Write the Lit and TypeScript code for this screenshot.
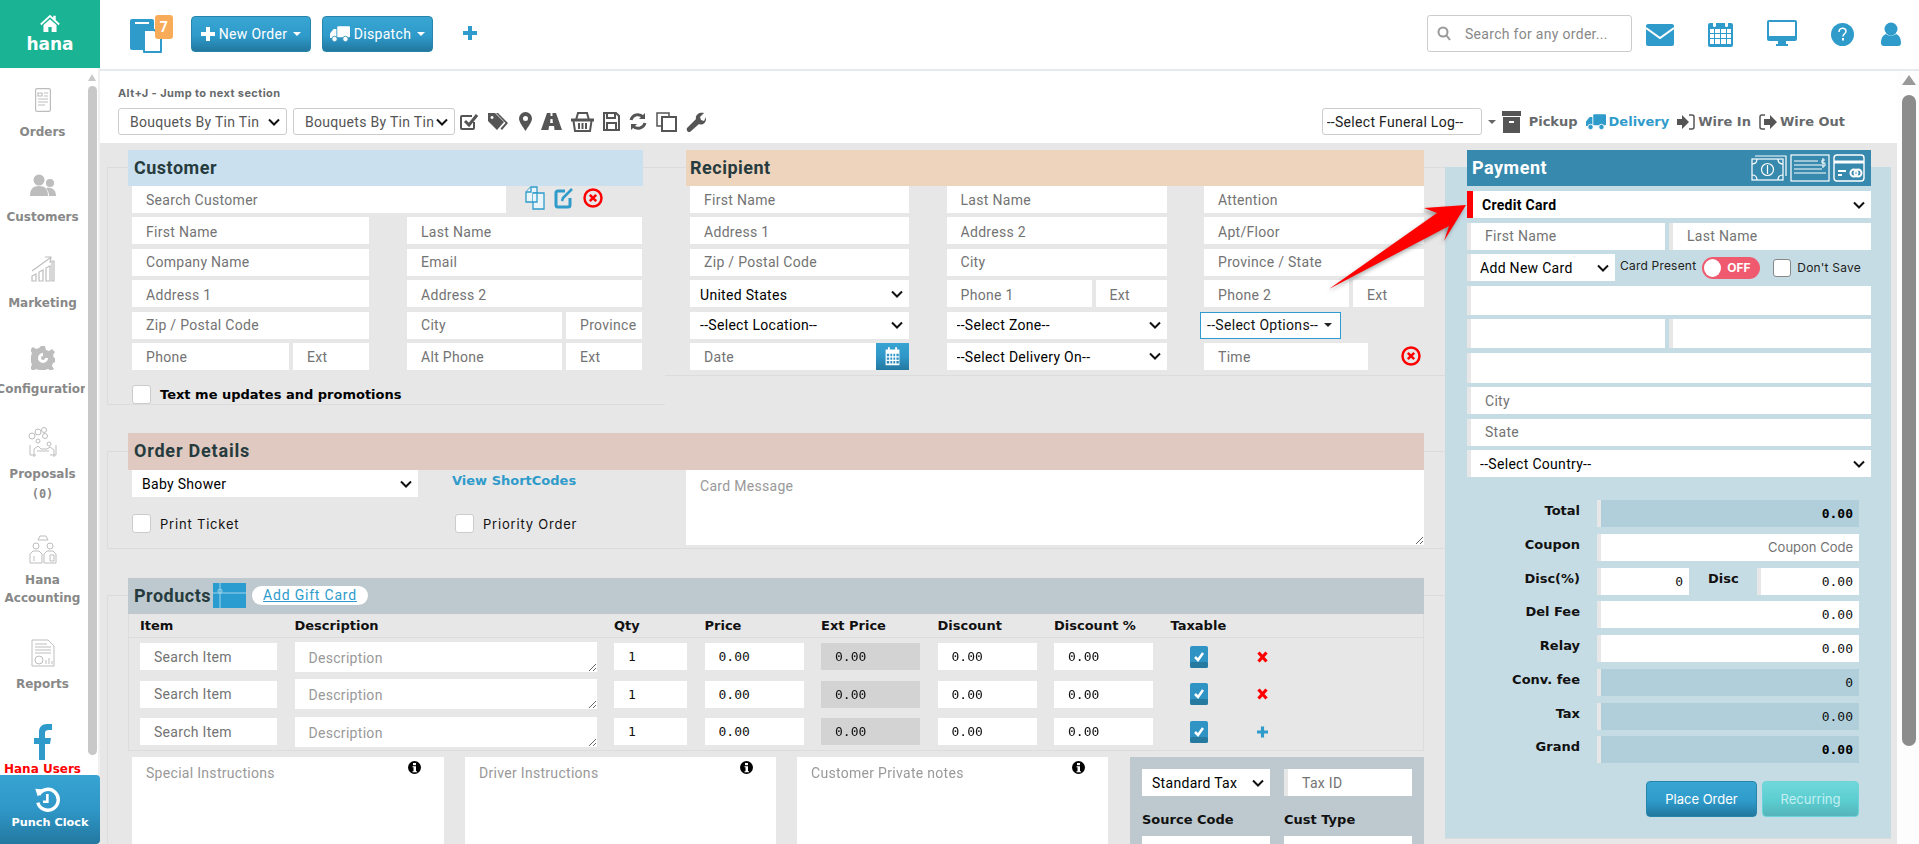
import { LitElement, html, css } from "lit";
import { customElement } from "lit/decorators.js";

const ic = {
  home: html`<svg width="20" height="18" viewBox="0 0 24 22" fill="#fff"><path d="M12 1 0 12l1.5 1.6L12 4l10.500 9.600L24 12l-5-4.600V2h-3v2.600z"/><path d="M12 6.500 4 13.500V22h6v-6h4v6h6v-8.500z"/></svg>`,
  doc: html`<svg width="34" height="34" viewBox="0 0 34 34"><rect x="1" y="0" width="24" height="31" rx="2" fill="#2f9bcb"/><rect x="6" y="3" width="14" height="2" fill="#fff"/><rect x="14" y="10" width="19" height="24" rx="1" fill="#2f9bcb"/><path d="M16 12h9l6 6v14H16z" fill="#fff"/></svg>`,
  plus: html`<svg width="14" height="14" viewBox="0 0 14 14" fill="currentColor"><path d="M5 0h4v5h5v4H9v5H5V9H0V5h5z"/></svg>`,
  truck: html`<svg width="20" height="16" viewBox="0 0 22 17" fill="currentColor"><rect x="8" y="0" width="14" height="12" rx="1"/><path d="M7 3H4L0 8v5h7z"/><circle cx="5" cy="14" r="3" stroke="#fff" stroke-width="1"/><circle cx="17" cy="14" r="3" stroke="#fff" stroke-width="1"/></svg>`,
  mail: html`<svg width="28" height="22" viewBox="0 0 28 22"><rect width="28" height="22" rx="2" fill="#2f9bcb"/><path d="M0 4l14 10L28 4" fill="none" stroke="#fff" stroke-width="2"/></svg>`,
  cal: html`<svg width="25" height="27" viewBox="0 0 25 27"><rect y="3" width="25" height="24" rx="2" fill="#2f9bcb"/><g fill="#fff"><rect x="5" y="0" width="3" height="7" rx="1.500"/><rect x="17" y="0" width="3" height="7" rx="1.500"/><path d="M2 9h4v4H2zm5 0h5v4H7zm6 0h5v4h-5zm6 0h4v4h-4zM2 14h4v4H2zm5 0h5v4H7zm6 0h5v4h-5zm6 0h4v4h-4zM2 19h4v5H2zm5 0h5v5H7zm6 0h5v5h-5zm6 0h4v5h-4z"/></g></svg>`,
  screen: html`<svg width="30" height="26" viewBox="0 0 30 26"><rect width="30" height="21" rx="2" fill="#2f9bcb"/><rect x="2" y="2" width="26" height="14" fill="#fff"/><path d="M11 21h8v3h2v2H9v-2h2z" fill="#2f9bcb"/></svg>`,
  help: html`<svg width="23" height="23" viewBox="0 0 23 23"><circle cx="11.500" cy="11.500" r="11.500" fill="#2f9bcb"/><path d="M8 9c0-5 7-5 7-.8 0 2.600-3 2.600-3 5.300" fill="none" stroke="#fff" stroke-width="1.500"/><rect x="11" y="15" width="2" height="2.500" fill="#fff"/></svg>`,
  user: html`<svg width="20" height="24" viewBox="0 0 20 24" fill="#2f9bcb"><circle cx="10" cy="7" r="6.500"/><path d="M0 21c0-5 2-8 5-9 3 2 7 2 10 0 3 1 5 4 5 9 0 2-1 3-3 3H3c-2 0-3-1-3-3z"/></svg>`,
  search: html`<svg width="14" height="15" viewBox="0 0 14 15" fill="none" stroke="#999" stroke-width="2"><circle cx="6" cy="6" r="4.500"/><path d="M9.500 9.500 13 14"/></svg>`,
  check: html`<svg width="18" height="19" viewBox="0 0 18 19" fill="none" stroke="#555" stroke-width="2"><path d="M14 10v6a1 1 0 0 1-1 1H2a1 1 0 0 1-1-1V5a1 1 0 0 1 1-1h10"/><path d="M5 9l4 4 8-10" stroke-width="3"/></svg>`,
  tag: html`<svg width="22" height="19" viewBox="0 0 22 19" fill="#555"><path d="M0 1h7l9 9-7 8-9-9zM4 4a1.500 1.500 0 1 0 .1 0z" fill-rule="evenodd"/><path d="M10 1l10 10-6 7-1.500-1.500 5-5.500L8 1z"/></svg>`,
  pin: html`<svg width="13" height="19" viewBox="0 0 13 19" fill="#555"><path fill-rule="evenodd" d="M6.500 0A6.500 6.500 0 0 0 0 6.500C0 10 4 15 6.500 19 9 15 13 10 13 6.500A6.500 6.500 0 0 0 6.500 0zm0 4a2.500 2.500 0 1 1 0 5 2.500 2.500 0 0 1 0-5z"/></svg>`,
  road: html`<svg width="21" height="17" viewBox="0 0 21 17" fill="#555"><path fill-rule="evenodd" d="M6 0h3.500v3h2V0H15l6 17h-7.500l-.4-4H8l-.5 4H0zm3.500 6-.4 4h2.800l-.4-4z"/></svg>`,
  basket: html`<svg width="23" height="20" viewBox="0 0 23 20" fill="none" stroke="#555" stroke-width="2"><path d="M5 8 7 1h9l2 7"/><path d="M0 8h23" stroke-width="3"/><path d="M2.500 9 4 19h15l1.500-10M8 11v6M11.500 11v6M15 11v6"/></svg>`,
  save: html`<svg width="17" height="19" viewBox="0 0 17 19" fill="none" stroke="#555" stroke-width="2"><path d="M1 1h12l3 3v14H1z"/><path d="M4 1v5h8V1M4 18v-7h9v7"/></svg>`,
  refresh: html`<svg width="18" height="19" viewBox="0 0 18 19" fill="none" stroke="#555" stroke-width="3"><path d="M2 8a7 7 0 0 1 12-3M16 11a7 7 0 0 1-12 3"/><path d="M16 1v6h-6z" fill="#555" stroke="none"/><path d="M2 18v-6h6z" fill="#555" stroke="none"/></svg>`,
  copy: html`<svg width="21" height="20" viewBox="0 0 21 20" fill="none" stroke="#555" stroke-width="1.500"><path d="M6 14H1V1h12v4"/><rect x="6" y="5" width="14" height="14" stroke-width="2"/></svg>`,
  wrench: html`<svg width="20" height="20" viewBox="0 0 20 20" fill="#555"><path d="M1 16 10 7c-1-4 3-7 8-6l-4 4 1 3 3 1 2-4c1 5-3 9-7 7l-9 8c-2 1-4-2-3-4z"/></svg>`,
  archive: html`<svg width="19" height="22" viewBox="0 0 19 22" fill="#555"><rect width="19" height="5"/><path fill-rule="evenodd" d="M1 6h17v16H1zM7 10v2h5v-2z"/></svg>`,
  signin: html`<svg width="18" height="16" viewBox="0 0 18 16"><path d="M0 5h5V1l7 7-7 7v-4H0z" fill="#555"/><path d="M12 1h3a2 2 0 0 1 2 2v10a2 2 0 0 1-2 2h-3" fill="none" stroke="#555" stroke-width="1.500"/></svg>`,
  signout: html`<svg width="18" height="16" viewBox="0 0 18 16"><path d="M5 5h6V1l7 7-7 7v-4H5z" fill="#555"/><path d="M6 1H3a2 2 0 0 0-2 2v10a2 2 0 0 0 2 2h3" fill="none" stroke="#555" stroke-width="1.500"/></svg>`,
  dupes: html`<svg width="20" height="24" viewBox="0 0 20 24" fill="#eaf5fa" stroke="#2f9bcb" stroke-width="1.300"><path d="M6 1h6v15H1V6z"/><path d="M6 1v5H1"/><path d="M8 7h11v16H8z"/><path d="M8 7l4 0v9H8"/></svg>`,
  edit: html`<svg width="20" height="22" viewBox="0 0 20 22" fill="none" stroke="#2f9bcb" stroke-width="3"><path d="M11 4H4a2 2 0 0 0-2 2v12a2 2 0 0 0 2 2h10a2 2 0 0 0 2-2v-7"/><path d="M8 14l1-3 9-9" stroke-width="2.500"/></svg>`,
  xc: html`<svg width="20" height="20" viewBox="0 0 20 20" fill="none" stroke="#f00" stroke-width="2.500"><circle cx="10" cy="10" r="8.500"/><path d="M6.800 6.800l6.400 6.400M13.200 6.800l-6.400 6.400"/></svg>`,
  calw: html`<svg width="15" height="19" viewBox="0 0 25 31" fill="#fff"><rect x="5" y="0" width="3" height="7"/><rect x="17" y="0" width="3" height="7"/><path fill-rule="evenodd" d="M1 4h23v26H1zM3 11v4h4v-4zm6 0v4h3v-4zm5 0v4h3v-4zm5 0v4h4v-4zM3 17v4h4v-4zm6 0v4h3v-4zm5 0v4h3v-4zm5 0v4h4v-4zM3 23v4h4v-4zm6 0v4h3v-4zm5 0v4h3v-4zm5 0v4h4v-4z"/></svg>`,
  info: html`<svg width="13" height="13" viewBox="0 0 13 13"><circle cx="6.500" cy="6.500" r="6.500" fill="#000"/><rect x="5" y="2" width="3" height="2.200" fill="#fff"/><path d="M4.500 5.300h3.500v5h1v1H4.500v-1h1v-4h-1z" fill="#fff"/></svg>`,
  x: html`<svg width="11" height="12" viewBox="0 0 11 12" fill="none" stroke="#f00" stroke-width="3.200"><path d="M1.500 1.500l8 9M9.500 1.500l-8 9"/></svg>`,
  tick: html`<svg width="18" height="22" viewBox="0 0 18 22"><rect width="18" height="22" rx="2" fill="#2f93c4"/><rect y="16" width="18" height="6" rx="2" fill="#26799f"/><path d="M5 11l3 3 5-7" fill="none" stroke="#fff" stroke-width="2.500"/></svg>`,
  cash: html`<svg width="36" height="28" viewBox="0 0 36 28" fill="none" stroke="#fff" stroke-width="1.200"><path d="M4 2h31v20"/><rect x="1" y="5" width="31" height="21"/><circle cx="16.500" cy="15.500" r="6"/><path d="M1 10c3 0 5-2 5-5M32 10c-3 0-5-2-5-5M1 21c3 0 5 2 5 5M32 21c-3 0-5 2-5 5M16.500 11v9"/></svg>`,
  cheque: html`<svg width="40" height="28" viewBox="0 0 40 28" fill="none" stroke="#fff" stroke-width="1.200"><rect x="1" y="1" width="38" height="26"/><path d="M4 7h24M4 11h28M4 15h28M4 19h32"/><path d="M33 4v10M35 6h-3v3h3v3h-3" stroke-width="1"/></svg>`,
  ccard: html`<svg width="32" height="28" viewBox="0 0 32 28" fill="none" stroke="#fff" stroke-width="1.400"><rect x="1" y="1" width="30" height="26" rx="3"/><path d="M1 8h30" stroke-width="3"/><path d="M5 17h8M5 21h4" stroke-width="2"/><circle cx="21" cy="19" r="3.500" stroke-width="2"/><circle cx="25" cy="19" r="3.500" stroke-width="2"/></svg>`,
  clock: html`<svg width="27" height="26" viewBox="0 0 28 30" fill="none" stroke="#fff" stroke-width="4"><path d="M5 9a12 12 0 1 1-1 9"/><path d="M1 2l10 1-7 8z" fill="#fff" stroke="none"/><path d="M15 8v9h-5" stroke-width="3"/></svg>`,
  gift: html`<svg width="33" height="25" viewBox="0 0 33 25"><rect width="33" height="25" fill="#2b9ccf"/><path d="M7 0v25M0 10h33" stroke="#9fd3ea" stroke-width="1" fill="none"/><circle cx="7" cy="8" r="2" fill="none" stroke="#9fd3ea"/></svg>`,
};
const g = "#bdbdbd";
const side = {
  orders: html`<svg width="16" height="24" viewBox="0 0 16 24" fill="none" stroke="${g}" stroke-width="1.200"><rect x=".6" y=".6" width="14.800" height="22.800" rx="1.500"/><path d="M3 5h4v3H3zM9 5h4M9 8h4M3 11h10M3 14h10M3 17h7"/></svg>`,
  customers: html`<svg width="26" height="24" viewBox="0 0 26 24" fill="${g}"><circle cx="9" cy="6" r="5.500"/><circle cx="20" cy="9" r="4"/><path d="M0 22c0-7 3-10 9-10 6 0 9 3 9 10z"/><path d="M16 14c5-1 10 1 10 8h-7c0-3-1-6-3-8z"/></svg>`,
  marketing: html`<svg width="24" height="26" viewBox="0 0 24 26" fill="none" stroke="${g}" stroke-width="1.200"><path d="M1 20v5h4v-7zM8 16v9h4V14zM15 12v13h4V10zM21 5v20h2V5z"/><path d="M1 15 19 2M14 1l6 0-1 6"/></svg>`,
  config: html`<svg width="24" height="24" viewBox="0 0 24 24" fill="${g}"><path fill-rule="evenodd" d="M10 0h4l1 4 3 1 3-2 3 3-2 3 1 3 2 0v4l-3 1-1 3 2 3-3 2-3-2-3 1-1 3h-4l-1-3-3-1-3 2-3-3 2-3-1-3-3-1v-4l3-1 1-3-2-3 3-3 3 2 3-1zM12 7a5 5 0 1 0 5 5h-3a2 2 0 1 1-2-2z"/></svg>`,
  proposals: html`<svg width="32" height="32" viewBox="0 0 32 32" fill="none" stroke="${g}" stroke-width="1"><circle cx="5" cy="9" r="3"/><circle cx="11" cy="5" r="3"/><circle cx="17" cy="3" r="2.500"/><circle cx="18" cy="9" r="2.500"/><circle cx="11" cy="14" r="2"/><circle cx="22" cy="17" r="2"/><path d="M7 30v-8l4-3 3 3h6l3-2 4 3v7M3 18v10h6M29 18v10h-6M10 24h12"/></svg>`,
  accounting: html`<svg width="28" height="30" viewBox="0 0 28 30" fill="none" stroke="${g}" stroke-width="1"><circle cx="7" cy="12" r="3"/><circle cx="21" cy="12" r="3"/><path d="M1 29V20l3-3h6l3 3v9zM15 29V20l3-3h6l3 3v9zM9 6h10l-2-4h-6zM5 22v5M21 21h4v6h-4z"/></svg>`,
  reports: html`<svg width="24" height="28" viewBox="0 0 24 28" fill="none" stroke="${g}" stroke-width="1"><path d="M1 1h16l6 6v20H1z"/><path d="M4 5h12M4 8h16M4 11h16M4 14h16"/><circle cx="8" cy="21" r="4"/><path d="M15 25v-4M18 25v-6M21 25v-3"/></svg>`,
  fb: html`<svg width="18" height="36" viewBox="0 0 18 36" fill="#2f9bcb"><path d="M5 36V20H0v-6h5V8c0-5 3-8 8-8h5v6h-3c-3 0-4 1-4 3v5h6l-1 6h-5v16z"/></svg>`,
};

const nav = [
  [side.orders, ["Orders"]],
  [side.customers, ["Customers"]],
  [side.marketing, ["Marketing"]],
  [side.config, ["Configuration"]],
  [side.proposals, ["Proposals", "(0)"]],
  [side.accounting, ["Hana", "Accounting"]],
  [side.reports, ["Reports"]],
  [side.fb, ["Hana Users"]],
] as const;

@customElement("app-root")
export class AppRoot extends LitElement {
  static styles = css`
    :host { display: grid; grid-template-columns: 100px 1819px; width: 1919px; height: 844px; overflow: hidden; position: relative; font-family: Roboto, "Liberation Sans", sans-serif; font-size: 14px; letter-spacing: .3px; color: #333; background: #fff; }
    * { box-sizing: border-box; }
    input, select, textarea { font-family: inherit; font-size: 14px; letter-spacing: .3px; border: 0; border-radius: 0; background: #fff; height: 27px; min-width: 0; width: 100%; outline: 0; display: block; color: #333; }
    input { padding: 0 2px 0 14px; }
    select { appearance: none; padding: 0 22px 0 10px; color: #000; background: #fff url("data:image/svg+xml,%3Csvg xmlns='http://www.w3.org/2000/svg' width='12' height='8'%3E%3Cpath d='M1 1.500l5 5 5-5' fill='none' stroke='%23111' stroke-width='2'/%3E%3C/svg%3E") no-repeat right 6px center; }
    textarea { padding: 8px 14px; resize: both; }
    ::placeholder { color: #737373; opacity: 1; }
    textarea::placeholder { color: #999; }
    .dj { font-family: "DejaVu Sans", sans-serif; font-weight: 700; font-size: 13px; letter-spacing: 0; }
    .mono { font-family: "DejaVu Sans Mono", monospace; font-size: 13px; letter-spacing: 0; }
    .aside { display: flex; flex-direction: column; height: 844px; position: relative; border-right: 2px solid #f0f0f0; width: 100px; }
    .logo { height: 68px; width: 100px; background: #1ab394; color: #fff; display: flex; flex-direction: column; align-items: center; padding-top: 14px; margin-right: -2px; }
    .logo b { font-family: "DejaVu Sans", sans-serif; font-size: 17px; line-height: 22px; margin-top: 1px; letter-spacing: 0; }
    .navwrap { flex: 1; display: flex; min-height: 0; overflow: hidden; }
    .nav { width: 85px; overflow: hidden; flex: none; }
    .item { display: flex; flex-direction: column; align-items: center; font-family: "DejaVu Sans", sans-serif; font-size: 12px; letter-spacing: 0; font-weight: 700; color: #888; line-height: 20px; white-space: nowrap; }
    .item .ico { display: flex; align-items: center; justify-content: center; }
    .item span { display: block; }
    .item:nth-child(1) { margin-top: 22px; } .item:nth-child(1) .ico { height: 20px; margin-bottom: 12px; }
    .item:nth-child(2) { margin-top: 34px; } .item:nth-child(2) .ico { height: 20px; margin-bottom: 11px; }
    .item:nth-child(3) { margin-top: 31px; } .item:nth-child(3) .ico { height: 22px; margin-bottom: 13px; }
    .item:nth-child(4) { margin-top: 33px; } .item:nth-child(4) .ico { height: 23px; margin-bottom: 10px; }
    .item:nth-child(5) { margin-top: 30px; } .item:nth-child(5) .ico { height: 28px; margin-bottom: 7px; }
    .item:nth-child(5) span:last-child { font-family: "DejaVu Sans Mono", monospace; }
    .item:nth-child(6) { margin-top: 31px; line-height: 18px; } .item:nth-child(6) .ico { height: 27px; margin-bottom: 9px; }
    .item:nth-child(7) { margin-top: 33px; } .item:nth-child(7) .ico { height: 26px; margin-bottom: 8px; }
    .item:nth-child(8) { margin-top: 31px; color: #f00; line-height: 11px; } .item:nth-child(8) .ico { height: 34px; margin-bottom: 5px; }
    .sbar { width: 9px; margin-left: 3px; position: relative; flex: none; }
    .sbar i { position: absolute; left: 0; right: 0; top: 18px; height: 669px; background: #c8c8c8; border-radius: 5px; }
    .sbar em { position: absolute; top: 6px; left: 0; border: 4.500px solid transparent; border-top: 0; border-bottom: 7px solid #c8c8c8; }
    .punch { height: 69px; width: 100px; background: linear-gradient(#37a4d2, #2f97c8 50%, #23789f); color: #fff; border-radius: 0 4px 4px 0; display: flex; flex-direction: column; align-items: center; padding-top: 12px; font-family: "DejaVu Sans", sans-serif; letter-spacing: 0; font-weight: 700; font-size: 11.300px; line-height: 16px; gap: 2px; }
    .punch svg { margin-left: -8px; }
    .main { display: flex; flex-direction: column; min-width: 0; }
    .top { height: 71px; border-bottom: 2px solid #e7eaec; display: flex; align-items: flex-start; flex: none; }
    .docw { position: relative; margin: 19px 0 0 29px; width: 62px; }
    .badge { position: absolute; left: 26px; top: -4px; width: 18px; height: 24px; background: #f8ac59; color: #fff; border-radius: 3px; font-weight: 700; font-size: 14px; display: flex; align-items: center; justify-content: center; }
    .btn { height: 36px; margin-top: 16px; border: 1px solid #2785ab; border-radius: 4px; color: #fff; background: linear-gradient(#39a5d2, #2f9bcb 55%, #22789f); display: flex; align-items: center; justify-content: center; gap: 4px; font-size: 14px; }
    .b1 { width: 120px; } .b2 { width: 111px; margin-left: 11px; }
    .b2 svg circle { stroke: #2f8fba; }
    .caret { display: inline-block; border: 4px solid transparent; border-top: 4px solid currentColor; border-bottom: 0; margin-left: 2px; }
    .addplus { color: #2f9bcb; margin: 26px 0 0 30px; }
    .right { margin-left: auto; display: flex; align-items: flex-start; }
    .sbox { width: 205px; height: 37px; margin-top: 15px; border: 1px solid #ccc; border-radius: 3px; display: flex; align-items: center; padding-left: 9px; gap: 14px; color: #888; }
    .mail { margin: 24px 0 0 14px; } .calr { margin: 20px 0 0 34px; } .scr { margin: 20px 0 0 34px; } .hlp { margin: 23px 0 0 34px; } .usr { margin: 22px 18px 0 27px; }
    .mid { flex: 1; display: flex; min-height: 0; }
    .page { width: 1797px; display: flex; flex-direction: column; flex: none; min-height: 0; }
    .pbar { width: 22px; position: relative; background: #fdfdfd; }
    .pbar i { position: absolute; left: 5px; width: 14px; top: 24px; height: 651px; background: #8c8c8c; border-radius: 7px; }
    .pbar em { position: absolute; left: 5px; top: 4px; border: 7px solid transparent; border-top: 0; border-bottom: 10px solid #999; }
    .pbar u { position: absolute; left: 5px; bottom: 6px; border: 7px solid transparent; border-bottom: 0; border-top: 10px solid #8c8c8c; }
    .bar { height: 72px; flex: none; padding: 16px 0 0 18px; position: relative; }
    .hint { font-family: Inter, sans-serif; font-size: 11px; font-weight: 700; color: #676a6c; line-height: 13px; letter-spacing: .4px; }
    .tools { display: flex; align-items: center; margin-top: 8px; height: 27px; }
    .tools select { border: 1px solid #ccc; border-radius: 3px; color: #555; padding: 0 20px 0 11px; }
    .s1 { width: 169px; flex: none; } .s2 { width: 162px; flex: none; margin: 0 5px 0 6px; }
    .tools svg { flex: none; }
    .t2 { margin-left: 10px; } .t3 { margin-left: 9px; }
    .tools .fun { width: 160px; flex: none; margin-left: auto; color: #222; background-image: none; padding: 0 4px; }
    .lnk { color: #676a6c; white-space: nowrap; display: flex; align-items: center; gap: 3px; margin-left: 8px; }
    .lnk.on { color: #2f9bcb; }
    .lnk.on svg circle { stroke: #fff; }
    .lnk.end { margin-right: 52px; }
    .tcaret { color: #666; margin: 0 6px 0 6px; }
    .form { flex: 1; background: #e7e7e7; padding: 24px 6px 0 7px; display: flex; min-height: 0; overflow: hidden; }
    .left { width: 1338px; flex: none; }
    .toprow { display: flex; align-items: flex-start; }
    .fs { border: 1px solid #dcdcdc; border-right: 0; }
    .head { height: 36px; margin: -18px 0 0 20px; display: flex; align-items: center; padding: 0 0 2px 6px; font-weight: 700; font-size: 18px; letter-spacing: .5px; color: #263b3d; }
    .cust { width: 558px; height: 238px; }
    .cust .head { width: 515px; background: #cbe0ef; }
    .rec { width: 780px; height: 209px; border-left: 0; }
    .rec .head { width: 738px; margin-left: 21px; padding-left: 4px; background: #eed3bd; }
    .rows { margin-left: 24px; display: flex; flex-direction: column; gap: 4.400px; }
    .rec .rows { margin-left: 25px; }
    .rows > :nth-child(even) input, .rows > :nth-child(even) select { padding-top: 2px; }
    .c2 { display: grid; grid-template-columns: 237px 235px; column-gap: 38px; }
    .c3 { display: grid; grid-template-columns: 219px 220px 220px; column-gap: 37.500px; }
    .pr { display: grid; grid-template-columns: 1fr 76px; column-gap: 4px; }
    .c3 .pr { grid-template-columns: 145px 71px; }
    .sr { display: flex; align-items: center; }
    .sr input { width: 374px; flex: none; }
    .sr svg { flex: none; }
    .sr .a { margin-left: 19px; } .sr .b { margin-left: 9px; } .sr .c { margin-left: 9px; }
    .date { position: relative; display: flex; }
    .calb { width: 33px; height: 27px; flex: none; background: linear-gradient(#37a4d2, #2f97c8 50%, #23789f); display: flex; align-items: center; justify-content: center; }
    .opt { width: 141px; height: 27px; margin-left: -4px; border: 1px solid #2f9bd0; background: #fff; display: flex; align-items: center; padding-left: 6px; gap: 4px; color: #111; white-space: nowrap; }
    .opt .caret { color: #222; }
    .time { display: flex; align-items: center; }
    .time input { width: 164px; flex: none; }
    .time svg { margin-left: 33px; flex: none; }
    .ck { width: 19px; height: 19px; background: #fff; border: 1px solid #ccc; border-radius: 3px; flex: none; }
    .chk { display: flex; align-items: center; gap: 9px; color: #111; font-family: Inter, sans-serif; font-size: 13px; letter-spacing: .8px; white-space: nowrap; }
    .chk.dj { font-family: "DejaVu Sans", sans-serif; letter-spacing: 0; }
    .tx { margin: 15px 0 0 24px; color: #000; }
    .ord { width: 1338px; height: 98px; margin-top: 46px; border: 1px solid #dcdcdc; border-right: 0; }
    .ord .head { height: 37px; margin-top: -19px; width: 1296px; background: #dfc9c0; letter-spacing: .8px; }
    .obody { display: flex; }
    .ol { width: 554px; margin-left: 24px; flex: none; position: relative; }
    .osel { width: 286px; }
    .vs { position: absolute; left: 320px; top: 3px; color: #2f9bcb; }
    .orow { display: flex; margin-top: 17px; }
    .orow .chk:first-child { width: 323px; flex: none; }
    .card { width: 738px; height: 75px; }
    .prod { width: 1338px; margin-top: 46px; height: 400px; border-left: 1px solid #dcdcdc; border-top: 1px solid #dcdcdc; }
    .prod .head { width: 1296px; background: #bdc9ce; gap: 0; }
    .gift { margin-left: 2px; display: flex; }
    .pill { margin-left: 6px; width: 116px; height: 19px; background: #fff; border-radius: 10px; color: #2f9bcb; text-decoration: underline; font-size: 14px; font-weight: 400; display: flex; align-items: center; justify-content: center; letter-spacing: .8px; }
    .tbl { margin-left: 20px; width: 1296px; border: 1px solid #dcdcdc; border-top: 0; padding-left: 11px; height: 137px; }
    .tr { display: grid; grid-template-columns: 137px 302px 73px 99px 99px 99px 99px 60px 30px; column-gap: 17.500px; align-items: center; height: 37.500px; }
    .th { height: 24px; color: #111; margin-left: -11px; padding-left: 11px; border-bottom: 1px solid #dcdcdc; white-space: nowrap; }
    .tr textarea { height: 30px; display: block; }
    .tr .ro { background: #d3d3d3; }
    .tr .cc { margin-left: 19px; display: flex; }
    .tr .xx { margin-left: 9px; display: flex; color: #2f9bcb; }
    .tr .xx svg { width: 11px; height: 12px; }
    .num { color: #111; }
    .notes { margin: 6px 0 0 24px; display: flex; gap: 21px; }
    .nt { position: relative; width: 311px; height: 120px; flex: none; }
    .nt:first-child { width: 312px; }
    .nt textarea { height: 120px; resize: none; padding: 8px 14px; }
    .nt svg { position: absolute; right: 23px; top: 4px; }
    .tax { width: 294px; height: 120px; background: #bdc9ce; padding: 12px; flex: none; margin-left: 1px; }
    .txg { display: grid; grid-template-columns: 128px 128px; column-gap: 14px; }
    .edge { border-left: 4px solid #e7e7e7; }
    .lab { color: #111; margin-top: 16px; height: 24px; line-height: 16px; }
    .pay { width: 446px; height: 672px; background: #c6dce4; flex: none; padding-left: 22px; border-bottom: 1px solid #dcdcdc; }
    .pay .head { width: 404px; margin: -17px 0 0; background: #3889ae; color: #fff; padding: 0 6px 2px 5px; }
    .pi { margin: 2px 0 0 auto; display: flex; gap: 3px; align-items: center; }
    .prow { width: 404px; display: flex; flex-direction: column; gap: 4.500px; margin-top: 5px; }
    .prow select { padding-left: 9px; }
    .cc-sel { border-left: 6px solid #f00; font-weight: 700; }
    .two { display: grid; grid-template-columns: 198px 202px; column-gap: 4px; }
    .addr { display: flex; align-items: center; white-space: nowrap; height: 27px; }
    .addr select { width: 148px; flex: none; }
    .addr .cp { margin-left: 5px; font-family: Inter, sans-serif; letter-spacing: .2px; color: #222; font-size: 12px; margin-bottom: 4px; }
    .tg { width: 58px; height: 22px; border-radius: 11px; background: #ef5a6e; margin-left: 6px; display: flex; align-items: center; padding-left: 2px; color: #fff; font-family: Inter, sans-serif; font-weight: 700; font-size: 12px; flex: none; gap: 6px; letter-spacing: 0; }
    .tg i { width: 17px; height: 18px; background: #fff; border-radius: 50%; }
    .ds { margin-left: 13px; gap: 6px; letter-spacing: .2px; font-size: 12px; color: #222; }
    .ds .ck { height: 18px; width: 18px; border-color: #888; }
    .h29 { height: 29px; } .h30 { height: 30px; }
    .tot { margin-top: 23px; width: 392px; display: grid; grid-template-columns: 113px 262px; column-gap: 17px; row-gap: 6.750px; }
    .tot label { font-family: "DejaVu Sans", sans-serif; font-weight: 700; font-size: 13px; letter-spacing: 0; text-align: right; color: #111; line-height: 21px; white-space: nowrap; }
    .tot input { text-align: right; padding: 0 6px 0 0; color: #111; font-family: "DejaVu Sans Mono", monospace; font-size: 13px; letter-spacing: 0; }
    .tot input.ro { background: #b0cfda; }
    .tot input.bd { font-weight: 700; color: #000; }
    .tot input.cpn { font-family: Inter, sans-serif; }
    .tot input::placeholder { color: #737373; }
    .dd { display: grid; grid-template-columns: 92px 68px 102px; align-items: start; }
    .dd label { text-align: left; padding-left: 19px; }
    .acts { width: 392px; display: flex; justify-content: flex-end; gap: 5px; margin-top: 18px; font-family: Inter, sans-serif; font-size: 13px; letter-spacing: 0; }
    .ab { height: 36px; border-radius: 4px; color: #fff; display: flex; align-items: center; justify-content: center; }
    .ab1 { width: 111px; border: 1px solid #2785ab; background: linear-gradient(#39a5d2, #2f9bcb 55%, #22789f); }
    .ab2 { width: 97px; border: 1px solid #6cd4d8; background: linear-gradient(#70d8da, #5bcdd0 55%, #55b5ba); color: #c4f0f2; }
    .arrow { position: absolute; left: 1320px; top: 195px; pointer-events: none; filter: drop-shadow(-2px 3px 2px rgba(0,0,0,.35)); }
  `;

  private row(i: number) {
    return html`<div class="tr">
      <input placeholder="Search Item" />
      <textarea placeholder="Description"></textarea>
      <input class="num mono" value="1" />
      <input class="num mono" value="0.00" />
      <input class="num mono ro" value="0.00" />
      <input class="num mono" value="0.00" />
      <input class="num mono" value="0.00" />
      <span class="cc">${ic.tick}</span>
      <span class="xx">${i < 2 ? ic.x : ic.plus}</span>
    </div>`;
  }

  render() {
    return html`
      <aside class="aside">
        <div class="logo">${ic.home}<b>hana</b></div>
        <div class="navwrap">
          <div class="nav">
            ${nav.map(([icon, lines]) => html`<div class="item"><div class="ico">${icon}</div>${lines.map((l) => html`<span>${l}</span>`)}</div>`)}
          </div>
          <div class="sbar"><em></em><i></i></div>
        </div>
        <div class="punch">${ic.clock}<span>Punch Clock</span></div>
      </aside>
      <div class="main">
        <header class="top">
          <div class="docw">${ic.doc}<span class="badge">7</span></div>
          <div class="btn b1">${ic.plus}<span>New Order</span><i class="caret"></i></div>
          <div class="btn b2">${ic.truck}<span>Dispatch</span><i class="caret"></i></div>
          <div class="addplus">${ic.plus}</div>
          <div class="right">
            <div class="sbox">${ic.search}<span>Search for any order...</span></div>
            <span class="mail">${ic.mail}</span><span class="calr">${ic.cal}</span><span class="scr">${ic.screen}</span><span class="hlp">${ic.help}</span><span class="usr">${ic.user}</span>
          </div>
        </header>
        <div class="mid">
          <div class="page">
            <div class="bar">
              <div class="hint">Alt+J - Jump to next section</div>
              <div class="tools">
                <select class="s1"><option>Bouquets By Tin Tin</option></select>
                <select class="s2"><option>Bouquets By Tin Tin</option></select>
                ${ic.check}<span class="t2"></span>${ic.tag}<span class="t3"></span>${ic.pin}<span class="t3"></span>${ic.road}<span class="t3"></span>${ic.basket}<span class="t3"></span>${ic.save}<span class="t3"></span>${ic.refresh}<span class="t3"></span>${ic.copy}<span class="t3"></span>${ic.wrench}
                <select class="fun"><option>--Select Funeral Log--</option></select>
                <i class="caret tcaret"></i>${ic.archive}
                <span class="lnk dj">Pickup</span>
                <span class="lnk on dj">${ic.truck}Delivery</span>
                <span class="lnk dj">${ic.signin}Wire In</span>
                <span class="lnk end dj">${ic.signout}Wire Out</span>
              </div>
            </div>
            <div class="form">
              <div class="left">
                <div class="toprow">
                  <section class="fs cust">
                    <div class="head">Customer</div>
                    <div class="rows">
                      <div class="sr"><input placeholder="Search Customer" /><span class="a">${ic.dupes}</span><span class="b">${ic.edit}</span><span class="c">${ic.xc}</span></div>
                      <div class="c2"><input placeholder="First Name" /><input placeholder="Last Name" /></div>
                      <div class="c2"><input placeholder="Company Name" /><input placeholder="Email" /></div>
                      <div class="c2"><input placeholder="Address 1" /><input placeholder="Address 2" /></div>
                      <div class="c2"><input placeholder="Zip / Postal Code" /><div class="pr"><input placeholder="City" /><input placeholder="Province" /></div></div>
                      <div class="c2"><div class="pr"><input placeholder="Phone" /><input placeholder="Ext" /></div><div class="pr"><input placeholder="Alt Phone" /><input placeholder="Ext" /></div></div>
                    </div>
                    <div class="chk tx dj"><span class="ck"></span>Text me updates and promotions</div>
                  </section>
                  <section class="fs rec">
                    <div class="head">Recipient</div>
                    <div class="rows">
                      <div class="c3"><input placeholder="First Name" /><input placeholder="Last Name" /><input placeholder="Attention" /></div>
                      <div class="c3"><input placeholder="Address 1" /><input placeholder="Address 2" /><input placeholder="Apt/Floor" /></div>
                      <div class="c3"><input placeholder="Zip / Postal Code" /><input placeholder="City" /><input placeholder="Province / State" /></div>
                      <div class="c3"><select><option>United States</option></select><div class="pr"><input placeholder="Phone 1" /><input placeholder="Ext" /></div><div class="pr"><input placeholder="Phone 2" /><input placeholder="Ext" /></div></div>
                      <div class="c3"><select><option>--Select Location--</option></select><select><option>--Select Zone--</option></select><div class="opt">--Select Options--<i class="caret"></i></div></div>
                      <div class="c3"><div class="date"><input placeholder="Date" /><span class="calb">${ic.calw}</span></div><select><option>--Select Delivery On--</option></select><div class="time"><input placeholder="Time" />${ic.xc}</div></div>
                    </div>
                  </section>
                </div>
                <section class="ord">
                  <div class="head">Order Details</div>
                  <div class="obody">
                    <div class="ol">
                      <select class="osel"><option>Baby Shower</option></select>
                      <span class="vs dj">View ShortCodes</span>
                      <div class="orow"><div class="chk"><span class="ck"></span>Print Ticket</div><div class="chk"><span class="ck"></span>Priority Order</div></div>
                    </div>
                    <textarea class="card" placeholder="Card Message"></textarea>
                  </div>
                </section>
                <section class="prod">
                  <div class="head">Products<span class="gift">${ic.gift}</span><span class="pill">Add Gift Card</span></div>
                  <div class="tbl">
                    <div class="tr th dj"><span>Item</span><span>Description</span><span>Qty</span><span>Price</span><span>Ext Price</span><span>Discount</span><span>Discount %</span><span>Taxable</span><span></span></div>
                    ${[0, 1, 2].map((i) => this.row(i))}
                  </div>
                  <div class="notes">
                    <div class="nt"><textarea placeholder="Special Instructions"></textarea>${ic.info}</div>
                    <div class="nt"><textarea placeholder="Driver Instructions"></textarea>${ic.info}</div>
                    <div class="nt"><textarea placeholder="Customer Private notes"></textarea>${ic.info}</div>
                    <div class="tax">
                      <div class="txg"><select><option>Standard Tax</option></select><input class="edge" placeholder="Tax ID" /></div>
                      <div class="txg lab dj"><span>Source Code</span><span>Cust Type</span></div>
                      <div class="txg"><input /><input /></div>
                    </div>
                  </div>
                </section>
              </div>
              <section class="pay">
                <div class="head">Payment<span class="pi">${ic.cash}${ic.cheque}${ic.ccard}</span></div>
                <div class="prow">
                  <select class="cc-sel"><option>Credit Card</option></select>
                  <div class="two"><input class="edge" placeholder="First Name" /><input class="edge" placeholder="Last Name" /></div>
                  <div class="addr"><select class="edge"><option>Add New Card</option></select><span class="cp">Card Present</span><span class="tg"><i></i>OFF</span><span class="chk ds"><span class="ck"></span>Don't Save</span></div>
                  <input class="edge h29" />
                  <div class="two"><input class="edge h29" /><input class="edge h29" /></div>
                  <input class="edge h30" />
                  <input class="edge" placeholder="City" />
                  <input class="edge" placeholder="State" />
                  <select class="edge"><option>--Select Country--</option></select>
                </div>
                <div class="tot">
                  <label>Total</label><input class="edge ro bd" value="0.00" />
                  <label>Coupon</label><input class="edge cpn" placeholder="Coupon Code" />
                  <label>Disc(%)</label><div class="dd"><input class="edge" value="0" /><label>Disc</label><input class="edge" value="0.00" /></div>
                  <label>Del Fee</label><input class="edge" value="0.00" />
                  <label>Relay</label><input class="edge" value="0.00" />
                  <label>Conv. fee</label><input class="edge ro" value="0" />
                  <label>Tax</label><input class="edge ro" value="0.00" />
                  <label>Grand</label><input class="edge ro bd" value="0.00" />
                </div>
                <div class="acts"><div class="ab ab1">Place Order</div><div class="ab ab2">Recurring</div></div>
              </section>
            </div>
          </div>
          <div class="pbar"><em></em><i></i><u></u></div>
        </div>
      </div>
      <svg class="arrow" width="150" height="100" viewBox="1320 195 150 100"><polygon fill="#f00" points="1329,289 1437,213 1424,208 1466,205 1444,241 1449,226"/></svg>
    `;
  }
}
